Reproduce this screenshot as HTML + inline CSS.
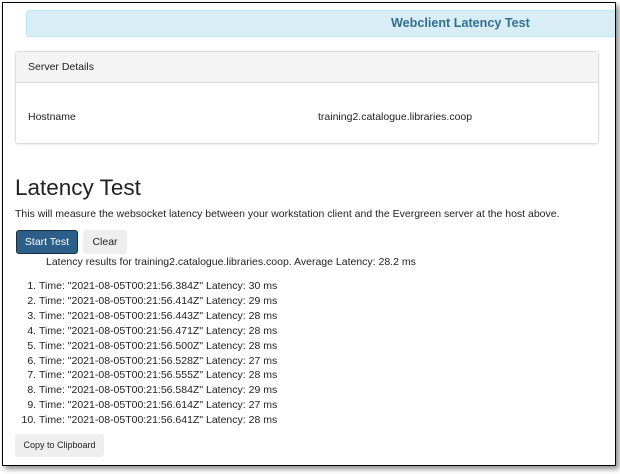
<!DOCTYPE html>
<html><head><style>
body{margin:0;width:620px;height:474px;background:#fff;font-family:"Liberation Sans",Arial,sans-serif;color:#222;position:relative;overflow:hidden}
.frame{position:absolute;left:2px;top:2px;width:612px;height:462px;border:1px solid #000;box-shadow:3px 3px 5px rgba(0,0,0,.45);overflow:hidden;background:#fff}
.ban{position:absolute;left:23px;top:7px;width:600px;height:25px;background:#d9edf7;border:1px solid #bce8f1;border-radius:3px;color:#31708f;font-weight:bold;font-size:12.6px;line-height:25px}
.ban span{position:absolute;left:364px}
.panel{position:absolute;left:12px;top:48px;width:582px;height:91px;border:1px solid #ddd;border-radius:3px;box-shadow:0 1px 2px rgba(0,0,0,.08)}
.ph{height:30px;background:#f4f4f4;border-bottom:1px solid #ddd;font-size:10.5px;line-height:30px;padding-left:12px}
.t{position:absolute;font-size:10.5px}
h1{position:absolute;left:12px;top:172px;margin:0;font-weight:normal;font-size:22.5px}
.btn{position:absolute;font-size:10.5px;text-align:center;border-radius:3px}
ol{position:absolute;left:11px;top:276px;margin:0;padding-left:25px;font-size:10.5px;line-height:14.9px}
</style></head><body>
<div class="frame">
<div class="ban"><span>Webclient Latency Test</span></div>
<div class="panel"><div class="ph">Server Details</div>
<div class="t" style="left:12px;top:59px">Hostname</div>
<div class="t" style="left:302px;top:59px">training2.catalogue.libraries.coop</div></div>
<h1>Latency Test</h1>
<div class="t" style="left:12px;top:205px">This will measure the websocket latency between your workstation client and the Evergreen server at the host above.</div>
<div class="btn" style="left:13px;top:227px;width:60px;height:22px;line-height:22px;background:#2c5f8a;color:#fff;border:1px solid #1a2e40">Start Test</div>
<div class="btn" style="left:80px;top:227px;width:44px;height:24px;line-height:24px;background:#eee">Clear</div>
<div class="t" style="left:43px;top:253px">Latency results for training2.catalogue.libraries.coop. Average Latency: 28.2 ms</div>
<ol>
<li>Time: "2021-08-05T00:21:56.384Z" Latency: 30 ms</li>
<li>Time: "2021-08-05T00:21:56.414Z" Latency: 29 ms</li>
<li>Time: "2021-08-05T00:21:56.443Z" Latency: 28 ms</li>
<li>Time: "2021-08-05T00:21:56.471Z" Latency: 28 ms</li>
<li>Time: "2021-08-05T00:21:56.500Z" Latency: 28 ms</li>
<li>Time: "2021-08-05T00:21:56.528Z" Latency: 27 ms</li>
<li>Time: "2021-08-05T00:21:56.555Z" Latency: 28 ms</li>
<li>Time: "2021-08-05T00:21:56.584Z" Latency: 29 ms</li>
<li>Time: "2021-08-05T00:21:56.614Z" Latency: 27 ms</li>
<li>Time: "2021-08-05T00:21:56.641Z" Latency: 28 ms</li>
</ol>
<div class="btn" style="left:12px;top:431px;width:89px;height:23px;line-height:23px;background:#eee;font-size:9px">Copy to Clipboard</div>
</div>
</body></html>
